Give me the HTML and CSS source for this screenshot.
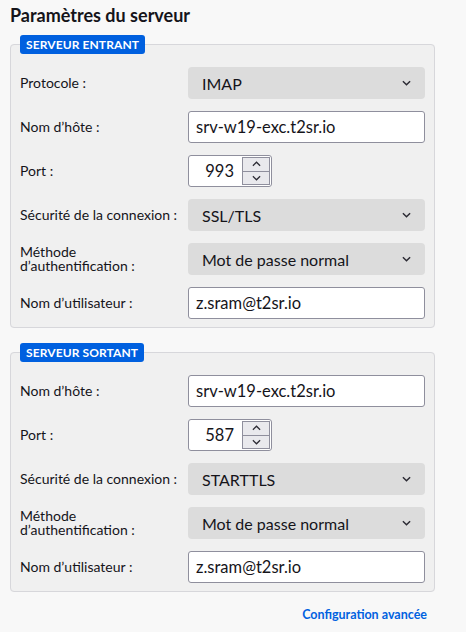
FILE: index.html
```html
<!DOCTYPE html>
<html lang="fr">
<head>
<meta charset="utf-8">
<link rel="stylesheet" href="styles.css">
</head>
<body>
<h1 class="title">Paramètres du serveur</h1>

<fieldset class="group">
  <legend class="badge">SERVEUR ENTRANT</legend>
  <div class="grid">
    <label class="lbl">Protocole :</label>
    <div class="select"><span>IMAP</span><svg class="chev" viewBox="0 0 10 6"><path d="M1 1l4 4 4-4"/></svg></div>

    <label class="lbl">Nom d’hôte :</label>
    <div class="input">srv-w19-exc.t2sr.io</div>

    <label class="lbl">Port :</label>
    <div class="port"><span class="num">993</span><div class="spin"><div class="sb"><svg viewBox="0 0 10 6"><path d="M1 5l4-4 4 4"/></svg></div><div class="sb"><svg viewBox="0 0 10 6"><path d="M1 1l4 4 4-4"/></svg></div></div></div>

    <label class="lbl">Sécurité de la connexion :</label>
    <div class="select"><span>SSL/TLS</span><svg class="chev" viewBox="0 0 10 6"><path d="M1 1l4 4 4-4"/></svg></div>

    <label class="lbl two"><span class="ln">Méthode</span><span class="ln">d’authentification :</span></label>
    <div class="select"><span>Mot de passe normal</span><svg class="chev" viewBox="0 0 10 6"><path d="M1 1l4 4 4-4"/></svg></div>

    <label class="lbl">Nom d’utilisateur :</label>
    <div class="input">z.sram@t2sr.io</div>
  </div>
</fieldset>

<fieldset class="group second">
  <legend class="badge">SERVEUR SORTANT</legend>
  <div class="grid">
    <label class="lbl">Nom d’hôte :</label>
    <div class="input">srv-w19-exc.t2sr.io</div>

    <label class="lbl">Port :</label>
    <div class="port"><span class="num">587</span><div class="spin"><div class="sb"><svg viewBox="0 0 10 6"><path d="M1 5l4-4 4 4"/></svg></div><div class="sb"><svg viewBox="0 0 10 6"><path d="M1 1l4 4 4-4"/></svg></div></div></div>

    <label class="lbl">Sécurité de la connexion :</label>
    <div class="select"><span>STARTTLS</span><svg class="chev" viewBox="0 0 10 6"><path d="M1 1l4 4 4-4"/></svg></div>

    <label class="lbl two"><span class="ln">Méthode</span><span class="ln">d’authentification :</span></label>
    <div class="select"><span>Mot de passe normal</span><svg class="chev" viewBox="0 0 10 6"><path d="M1 1l4 4 4-4"/></svg></div>

    <label class="lbl">Nom d’utilisateur :</label>
    <div class="input">z.sram@t2sr.io</div>
  </div>
</fieldset>

<div class="footer"><a class="link">Configuration avancée</a></div>
</body>
</html>
```

FILE: styles.css
```css
* { box-sizing: border-box; }
html, body { margin: 0; }
body {
  background: #f8f8f8;
  padding: 0 10px;
  width: 466px;
  height: 632px;
  overflow: hidden;
  font-family: "Lato", "Noto Sans", sans-serif;
  color: #15141a;
}
.title {
  margin: 0;
  padding-top: 4px;
  font-size: 18px;
  font-weight: 700;
  line-height: 22px;
  height: 35px;
}
.group {
  width: 425px;
  margin: 0;
  padding: 13px 9px 8px 9px;
  border: 1px solid #d7d7db;
  border-radius: 4px;
  background: #f0f0f0;
}
.group.second { margin-top: 15px; }
.badge {
  display: block;
  background: #0060df;
  color: #fff;
  font-size: 12px;
  font-weight: 700;
  line-height: 19px;
  height: 19px;
  padding: 0 6px;
  border-radius: 3px;
  letter-spacing: 0.1px;
}
.grid {
  display: grid;
  grid-template-columns: 168px 237px;
  row-gap: 12px;
  align-items: center;
}
.lbl {
  font-size: 14px;
  line-height: 16px;
}
.lbl.two { display: flex; flex-direction: column; }
.lbl.two .ln { line-height: 14px; height: 14px; display: block; }
.select {
  height: 32px;
  background: #dcdcdc;
  border-radius: 4px;
  display: flex;
  align-items: center;
  justify-content: space-between;
  padding: 0 14px 0 14px;
  font-size: 16px;
}
.chev { width: 9px; height: 6px; fill: none; stroke: #2b2a33; stroke-width: 1.6; }
.input {
  height: 32px;
  background: #fff;
  border: 1px solid #8f8f9d;
  border-radius: 3px;
  display: flex;
  align-items: center;
  padding: 0 7px;
  font-size: 16.5px;
}
.port {
  width: 84px;
  height: 32px;
  background: #fff;
  border: 1px solid #8f8f9d;
  border-radius: 3px;
  display: flex;
  align-items: center;
  justify-content: flex-end;
  padding: 1px;
  font-size: 16.5px;
}
.num { margin-right: 8px; }
.spin {
  width: 28px;
  height: 28px;
  border: 1px solid #8f8f9d;
  background: #e9e9ed;
  display: flex;
  flex-direction: column;
}
.sb {
  flex: 1;
  display: flex;
  align-items: center;
  justify-content: center;
}
.sb + .sb { border-top: 1px solid #8f8f9d; }
.sb svg { width: 9px; height: 6px; fill: none; stroke: #2b2a33; stroke-width: 1.4; }
.footer {
  display: flex;
  justify-content: flex-end;
  padding: 15px 8px 0 0;
  width: 425px;
}
.link {
  color: #0061e0;
  font-size: 12.5px;
  font-weight: 700;
}
```
